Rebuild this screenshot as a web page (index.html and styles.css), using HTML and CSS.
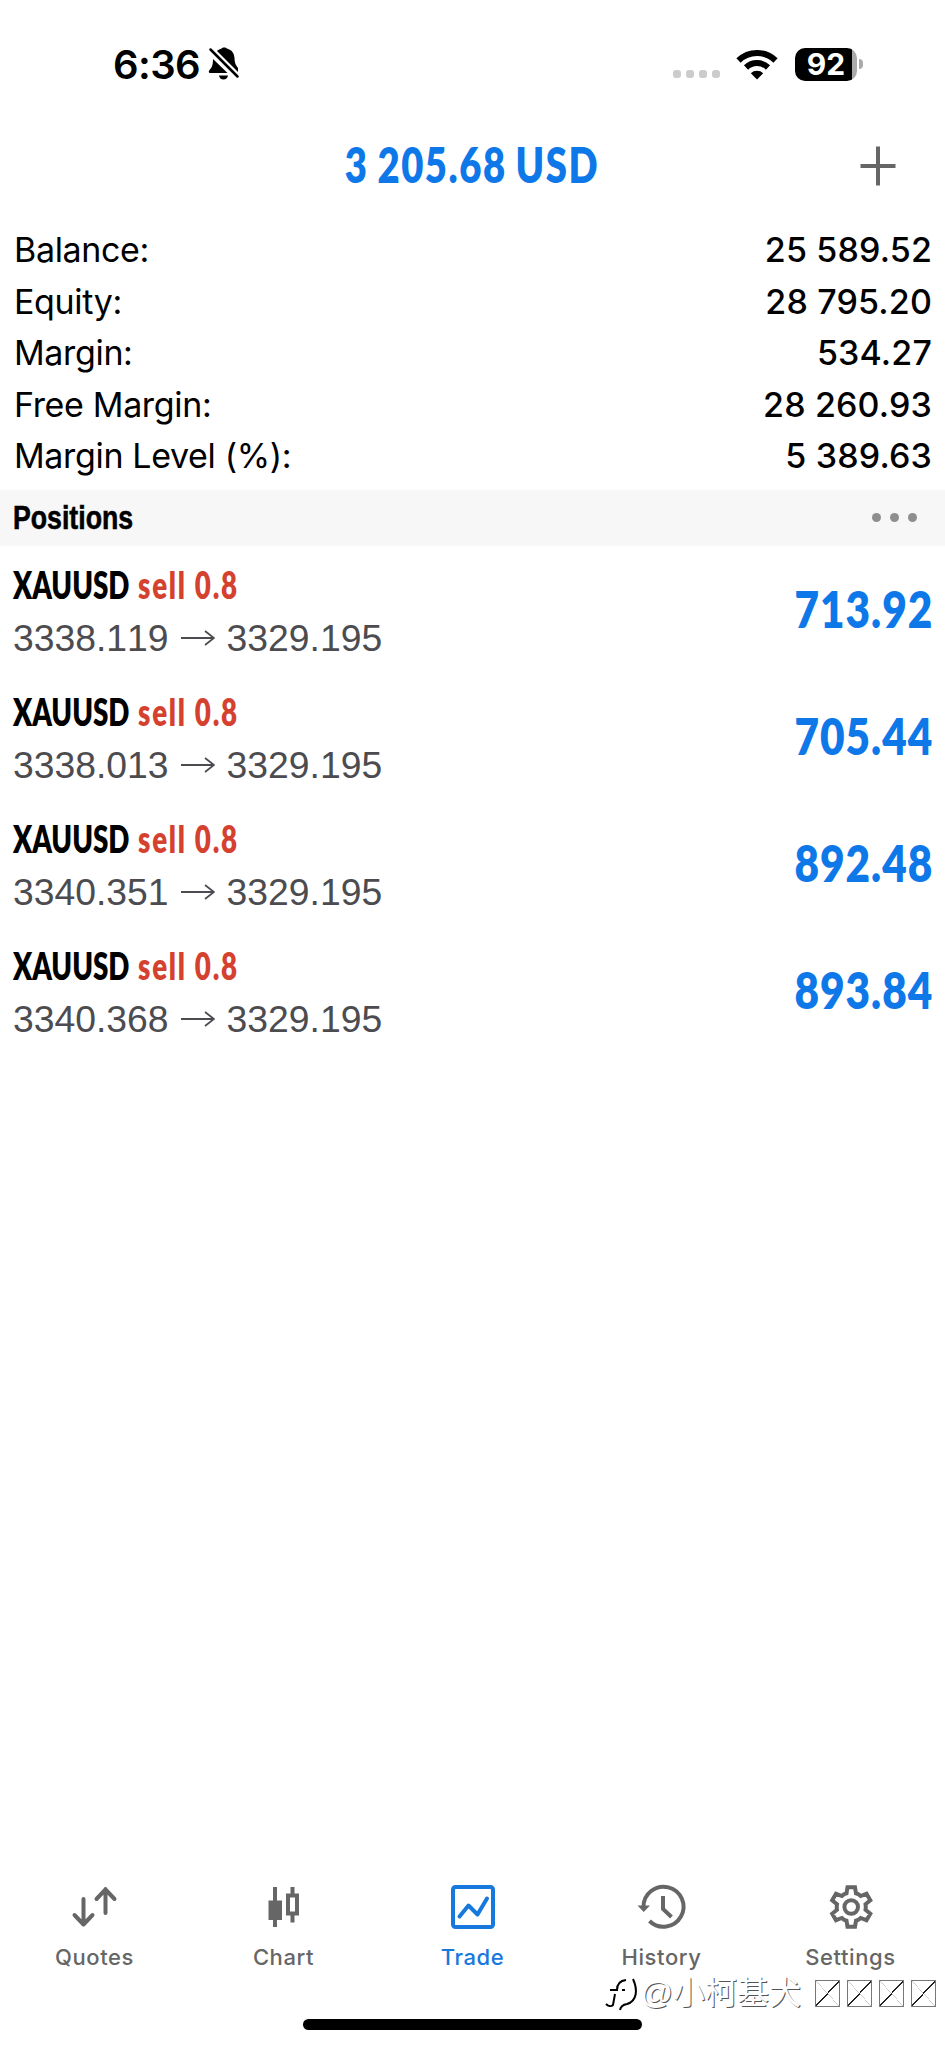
FILE: index.html
```html
<!DOCTYPE html>
<html lang="en">

<head>
    <meta charset="UTF-8">
    <meta name="viewport" content="width=device-width, initial-scale=1.0">
    <title>Trade</title>
    <link rel="stylesheet" href="styles.css">
</head>

<body>
    <div class="status-bar">
        <div class="clock">6:36</div>
        <svg class="bell" width="32" height="34" viewBox="0 0 32 34">
            <path d="M9 4C10.5 2.5 12 2 13.500 1.500C14.500 0 18 0 19 1.500C24 3 26 6 26.500 11C26.700 15 27 17 30 21V25Z" />
            <path d="M5 12L19.500 26H2C.5 26 .5 24 1.500 23C4 20.500 5 18 5 12Z" />
            <path d="M11 28.500H20C19.500 31 18 32.500 15.500 32.500S11.500 31 11 28.500Z" />
            <path class="slash" d="M2.500 2.500L29.500 29.500" />
        </svg>
        <div class="signal"><i></i><i></i><i></i><i></i></div>
        <svg class="wifi" width="42" height="31" viewBox="0 0 42 31">
            <path d="M2.500 11.500A26.500 26.500 0 0 1 39.500 11.500" />
            <path d="M10 18.500A16 16 0 0 1 32 18.500" />
            <path class="dot" d="M21 30.500L14.800 24.300A9 9 0 0 1 27.200 24.300Z" />
        </svg>
        <div class="battery">92</div>
        <div class="battery-cap"></div>
    </div>

    <header class="header">
        <h1><span class="condensed">3 205.68 USD</span></h1>
        <svg class="plus" width="40" height="40" viewBox="0 0 40 40">
            <path d="M20 .5V39.500M2.500 20H37.500" />
        </svg>
    </header>

    <div class="account">
        <div class="line"><span>Balance:</span><b>25 589.52</b></div>
        <div class="line"><span>Equity:</span><b>28 795.20</b></div>
        <div class="line"><span>Margin:</span><b>534.27</b></div>
        <div class="line"><span>Free Margin:</span><b>28 260.93</b></div>
        <div class="line"><span>Margin Level (%):</span><b>5 389.63</b></div>
    </div>

    <div class="section">
        <h2>Positions</h2>
        <div class="more"><i></i><i></i><i></i></div>
    </div>

    <div class="positions">
        <div class="position">
            <div>
                <div class="symbol">XAUUSD <span>sell 0.8</span></div>
                <div class="price">3338.119<svg width="34" height="18" viewBox="0 0 34 18"><path d="M0 9H32M24 2L33 9L24 16" /></svg>3329.195</div>
            </div>
            <div class="profit">713.92</div>
        </div>
        <div class="position">
            <div>
                <div class="symbol">XAUUSD <span>sell 0.8</span></div>
                <div class="price">3338.013<svg width="34" height="18" viewBox="0 0 34 18"><path d="M0 9H32M24 2L33 9L24 16" /></svg>3329.195</div>
            </div>
            <div class="profit">705.44</div>
        </div>
        <div class="position">
            <div>
                <div class="symbol">XAUUSD <span>sell 0.8</span></div>
                <div class="price">3340.351<svg width="34" height="18" viewBox="0 0 34 18"><path d="M0 9H32M24 2L33 9L24 16" /></svg>3329.195</div>
            </div>
            <div class="profit">892.48</div>
        </div>
        <div class="position">
            <div>
                <div class="symbol">XAUUSD <span>sell 0.8</span></div>
                <div class="price">3340.368<svg width="34" height="18" viewBox="0 0 34 18"><path d="M0 9H32M24 2L33 9L24 16" /></svg>3329.195</div>
            </div>
            <div class="profit">893.84</div>
        </div>
    </div>

    <nav class="tabs">
        <a class="tab">
            <svg width="48" height="48" viewBox="0 0 48 48">
                <path class="round" d="M12.500 16V41M3.500 32L12.500 41.500L21.500 32M34.500 30V6M25.500 16L34.500 6.500L43.500 16" />
            </svg>
            <span>Quotes</span>
        </a>
        <a class="tab">
            <svg width="48" height="48" viewBox="0 0 48 48">
                <path d="M15 4V44M32.500 4V12M32.500 32V39.500" />
                <path class="fill" d="M8.500 17.500H22V37H8.500Z" />
                <path d="M28 12.500H37V30.500H28Z" />
            </svg>
            <span>Chart</span>
        </a>
        <a class="tab active">
            <svg width="48" height="48" viewBox="0 0 48 48">
                <rect x="4" y="4" width="40" height="40" rx="2.500" />
                <path class="round" d="M10.500 33.500L19.500 22.500L28.500 31.500L38 15.500" />
            </svg>
            <span>Trade</span>
        </a>
        <a class="tab">
            <svg width="48" height="48" viewBox="0 0 48 48">
                <path d="M5.500 24A20 20 0 1 1 11.500 38M25 13V26L33.500 34" />
                <path class="fill" d="M-.5 22.500H12L5.700 29Z" />
            </svg>
            <span>History</span>
        </a>
        <a class="tab">
            <svg width="48" height="48" viewBox="0 0 48 48">
                <path d="M20.500 4.200H28L29 10.300Q31.500 11 33.700 13L39.500 10.800L43.300 17.300L38.500 21.200Q39.100 24 38.500 26.800L43.300 30.700L39.500 37.200L33.700 35Q31.500 37 29 37.700L28 43.800H20.500L19.500 37.700Q17 37 14.800 35L9 37.200L5.200 30.700L10 26.800Q9.400 24 10 21.200L5.200 17.300L9 10.800L14.800 13Q17 11 19.500 10.300Z" />
                <circle cx="24.200" cy="24" r="6.800" />
            </svg>
            <span>Settings</span>
        </a>
    </nav>

    <div class="home-bar"></div>

    <div class="watermark">
        <svg width="34" height="36" viewBox="0 0 34 36">
            <path d="M1 29C3 31 6 32 8 30L10 19M5 15H12Q12 6 21 5M17 15H20M28 4C33 15 32 26 22 29Q16 30 15 35" />
        </svg>
        <span>@小柯基犬</span>
        <div class="boxes"><i></i><i></i><i></i><i></i></div>
    </div>
</body>

</html>
```
FILE: styles.css
```css
* {
    box-sizing: border-box;
    margin: 0;
    padding: 0;
}

body {
    position: relative;
    width: 945px;
    height: 2048px;
    display: flex;
    flex-direction: column;
    background: #fff;
    color: #000;
    font-family: Inter, "Liberation Sans", sans-serif;
    overflow: hidden;
}

svg {
    display: block;
    fill: none;
}

/* status bar */
.status-bar {
    height: 128px;
    padding: 0 82px 0 113px;
    display: flex;
    align-items: center;
}

.clock {
    width: 95px;
    font-size: 40px;
    font-weight: 600;
    letter-spacing: -0.6px;
}

.bell {
    fill: #000;
}

.bell .slash {
    stroke: #000;
    stroke-width: 2.5;
    stroke-linecap: round;
}

.signal {
    display: flex;
    gap: 5px;
    margin: 20px 16px 0 auto;
}

.signal i {
    width: 8px;
    height: 8px;
    border-radius: 3px;
    background: #ccc;
}

.wifi {
    stroke: #000;
    stroke-width: 6;
}

.wifi .dot {
    fill: #000;
    stroke: none;
}

.battery {
    width: 62px;
    height: 33px;
    margin-left: 17px;
    border-radius: 10px;
    background: linear-gradient(90deg, #000 57px, #aaa 57px);
    color: #fff;
    font-size: 30px;
    font-weight: 700;
    line-height: 33px;
    text-align: center;
}

.battery-cap {
    width: 4px;
    height: 10px;
    margin-left: 2px;
    border-radius: 0 4px 4px 0;
    background: #aaa;
}

/* header */
.header {
    height: 94px;
    padding: 0 47px;
    display: grid;
    grid-template-columns: 1fr auto 1fr;
    align-items: start;
}

.header h1 {
    grid-column: 2;
    font-family: Lato, sans-serif;
    font-size: 49px;
    font-weight: 800;
    line-height: 72px;
    letter-spacing: 2px;
    word-spacing: -2px;
    color: #0f78e8;
    white-space: nowrap;
}

.condensed {
    display: inline-block;
    margin: 0 -40px;
    transform: scaleX(0.78);
}

.plus {
    justify-self: end;
    margin-top: 18px;
    stroke: #666;
    stroke-width: 4;
}

/* account summary */
.account {
    height: 267.5px;
    padding: 2px 13px 0 14px;
}

.line {
    height: 51.5px;
    display: flex;
    justify-content: space-between;
    align-items: center;
    font-size: 34px;
    letter-spacing: -0.35px;
}

.line b {
    font-weight: 500;
    letter-spacing: 0.15px;
}

.section {
    height: 56px;
    padding: 0 28px 0 13px;
    display: flex;
    justify-content: space-between;
    align-items: center;
    background: #f7f7f7;
}

.section h2 {
    font-family: "Liberation Sans", sans-serif;
    font-size: 34px;
    font-weight: 700;
    -webkit-text-stroke: 0.6px #000;
    transform: scaleX(0.785);
    transform-origin: left;
}

.more {
    display: flex;
    gap: 9px;
}

.more i {
    width: 9px;
    height: 9px;
    border-radius: 50%;
    background: #8e8e8e;
}

/* open positions */
.position {
    height: 127.3px;
    padding: 0 13px;
    display: flex;
    justify-content: space-between;
}

.symbol {
    height: 66px;
    font-family: Lato, sans-serif;
    font-size: 37px;
    font-weight: 800;
    line-height: 78px;
    white-space: nowrap;
    transform: scaleX(0.75);
    transform-origin: left;
}

.symbol span {
    margin-left: 3px;
    letter-spacing: 2.3px;
    color: #d5412f;
}

.price {
    display: flex;
    align-items: center;
    font-family: "Liberation Sans", sans-serif;
    font-size: 37.3px;
    font-kerning: none;
    line-height: 52px;
    color: #4c4c50;
}

.price svg {
    margin: 0 12px;
    stroke: #4c4c50;
    stroke-width: 1.8;
}

.profit {
    margin-right: -1px;
    font-family: Lato, sans-serif;
    font-size: 51px;
    font-weight: 800;
    line-height: 126px;
    letter-spacing: 1.2px;
    color: #0f78e8;
    transform: scaleX(0.83);
    transform-origin: right;
}

/* bottom navigation */
.tabs {
    height: 167px;
    margin-top: auto;
    display: grid;
    grid-template-columns: repeat(5, 1fr);
}

.tab {
    display: flex;
    flex-direction: column;
    align-items: center;
    padding-top: 2px;
    color: #666;
    font-size: 22px;
    font-weight: 450;
    letter-spacing: 0.6px;
}

.tab svg {
    margin-bottom: 13px;
    stroke: currentColor;
    stroke-width: 4;
    overflow: visible;
}

.tab .round {
    stroke-linecap: round;
    stroke-linejoin: round;
}

.tab .fill {
    fill: currentColor;
    stroke: none;
}

.active {
    color: #1778dd;
}

.home-bar {
    position: absolute;
    left: 303px;
    bottom: 18px;
    width: 339px;
    height: 11px;
    border-radius: 6px;
    background: #000;
}

/* author mark over the bottom corner */
.watermark {
    position: absolute;
    right: 9px;
    bottom: 35px;
    display: flex;
    align-items: center;
    color: #fff;
    font-family: "Liberation Sans", "Noto Sans CJK SC", sans-serif;
    font-size: 32px;
    line-height: 40px;
    text-shadow: 1px 1px 0 #555;
}

.watermark svg {
    margin-right: 2px;
    stroke: #000;
    stroke-width: 2;
}

.boxes {
    display: flex;
    gap: 7px;
    margin-left: 14px;
}

.boxes i {
    width: 25px;
    height: 27px;
    border: 1px solid #777;
    background: linear-gradient(to bottom right, transparent 48%, #222 48%, #222 52%, transparent 52%), linear-gradient(to top right, transparent 49%, #ccc 49%, #ccc 51%, transparent 51%);
}
```
